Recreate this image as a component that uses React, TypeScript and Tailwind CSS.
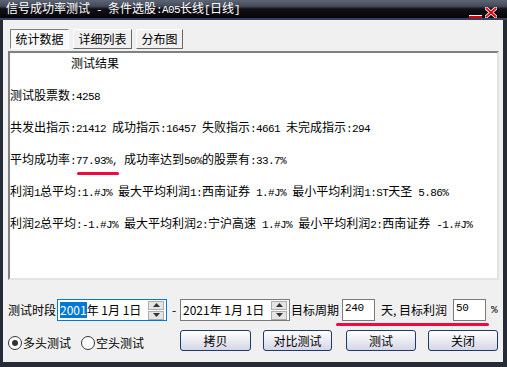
import type { ReactNode } from 'react';

const ASCII = /^[\x20-\x7e]+$/;

// panel / title text: CJK at 12px, ASCII as half-width mono
function Mixed({ text }: { text: string }) {
  const parts = text.split(/([\x20-\x7e]+)/).filter(Boolean);
  return (
    <>
      {parts.map((p, i) =>
        ASCII.test(p) ? (
          <span key={i} className="font-['Liberation_Mono',monospace] text-[11px] tracking-[-0.6px]">
            {p}
          </span>
        ) : (
          <span key={i}>{p}</span>
        )
      )}
    </>
  );
}

function Tab({ label, active, width }: { label: string; active?: boolean; width: string }) {
  return (
    <div
      className={`h-[20px] flex items-center justify-center text-[12px] leading-[16px] text-black ${width} ${
        active
          ? 'bg-[#f9f9f9] border border-t-[#808080] border-l-[#808080] border-b-white border-r-white'
          : 'bg-[#f0f0f0] border border-t-white border-l-white border-b-[#696969] border-r-[#696969]'
      }`}
    >
      {label}
    </div>
  );
}

function Spin() {
  return (
    <div className="ml-auto mr-[2px] flex flex-col w-[16px] h-[19px] gap-[1px]">
      <div className="flex-1 bg-[#e5e5e5] border border-[#adadad] flex items-center justify-center">
        <svg width="7" height="4" viewBox="0 0 7 4">
          <path d="M0 4L3.5 0L7 4Z" fill="#333" />
        </svg>
      </div>
      <div className="flex-1 bg-[#e5e5e5] border border-[#adadad] flex items-center justify-center">
        <svg width="7" height="4" viewBox="0 0 7 4">
          <path d="M0 0L3.5 4L7 0Z" fill="#333" />
        </svg>
      </div>
    </div>
  );
}

function DateBox({ year, focused }: { year: string; focused?: boolean }) {
  return (
    <div
      className={`w-[110px] h-[22px] bg-white flex items-center pl-[2px] border ${
        focused ? 'border-[#0078d7]' : 'border-[#7a7a7a]'
      }`}
    >
      <span className={focused ? 'bg-[#0078d7] text-white' : ''}>{year}</span>
      <span className="whitespace-pre">年 1月 1日</span>
      <Spin />
    </div>
  );
}

function Field({ value }: { value: string }) {
  return (
    <div className="w-[33px] h-[22px] bg-white border border-[#7a7a7a] pl-[2px] pt-[1px] font-['Liberation_Mono',monospace] text-[11px] leading-[14px] tracking-[-0.4px]">
      {value}
    </div>
  );
}

function Radio({ label, checked }: { label: string; checked?: boolean }) {
  return (
    <div className="flex items-center gap-[1px]">
      <div className="w-[14px] h-[14px] rounded-full border border-[#333] bg-white flex items-center justify-center">
        {checked && <div className="w-[6px] h-[6px] rounded-full bg-[#333]" />}
      </div>
      <span>{label}</span>
    </div>
  );
}

function Button({ children, className }: { children: ReactNode; className: string }) {
  return (
    <div
      className={`h-[21px] rounded-[3px] border border-[#1d3b6a] bg-gradient-to-b from-white to-[#d6d6e6] flex items-center justify-center ${className}`}
    >
      {children}
    </div>
  );
}

const lines = [
  '测试股票数:4258',
  '共发出指示:21412 成功指示:16457 失败指示:4661 未完成指示:294',
  '平均成功率:77.93%, 成功率达到50%的股票有:33.7%',
  '利润1总平均:1.#J% 最大平均利润1:西南证券 1.#J% 最小平均利润1:ST天圣 5.86%',
  '利润2总平均:-1.#J% 最大平均利润2:宁沪高速 1.#J% 最小平均利润2:西南证券 -1.#J%',
];

export default function App() {
  return (
    <div className="w-[507px] h-[367px] bg-[#272b35] flex flex-col font-['Noto_Sans_CJK_SC',sans-serif] text-[12px] leading-[16px] text-black">
      {/* title bar */}
      <div className="h-[18px] flex items-center pl-[6px] pr-[10px] bg-[linear-gradient(to_bottom,#5d6474_0%,#444a57_35%,#101016_50%,#060609_100%)]">
        <span className="text-white whitespace-pre">
          <Mixed text="信号成功率测试 - 条件选股:A05长线[日线]" />
        </span>
        <div className="ml-auto flex items-end gap-[3px] h-[11px] mt-[7px]">
          <div className="w-[13px] h-[3px] bg-[#e00000] border-t border-white" />
          <svg width="12" height="11" viewBox="0 0 12 11">
            <path d="M1.5 1.5L10.5 9.5M10.5 1.5L1.5 9.5" stroke="#fff" strokeWidth="3.4" strokeLinecap="square" />
            <path d="M1.5 1.5L10.5 9.5M10.5 1.5L1.5 9.5" stroke="#e00000" strokeWidth="1.8" strokeLinecap="square" />
          </svg>
        </div>
      </div>
      <div className="h-[2px] bg-[#34425f]" />

      {/* body */}
      <div className="ml-[3px] mr-[4px] mb-[5px] flex-1 bg-[#f0f0f0] flex flex-col px-[5px] pt-[9px]">
        <div className="flex gap-[4px] pl-[2px]">
          <Tab label="统计数据" active width="w-[59px]" />
          <Tab label="详细列表" width="w-[59px]" />
          <Tab label="分布图" width="w-[47px]" />
        </div>

        <div className="relative mt-[2px] w-[491px] h-[229px] bg-white border-2 border-t-[#808080] border-l-[#808080] border-b-[#e3e3e3] border-r-[#e3e3e3] pt-[2px] flex flex-col gap-[16px] whitespace-pre">
          <div className="pl-[61px]">测试结果</div>
          {lines.map(l => (
            <div key={l} className="h-[16px]">
              <Mixed text={l} />
            </div>
          ))}
          <div className="absolute left-[67px] top-[119px] w-[42px] h-[3px] rounded-full bg-[#f2073f]" />
        </div>

        <div className="relative mt-[18px] h-[24px] flex items-center whitespace-pre">
          <span>测试时段</span>
          <div className="ml-[1px]">
            <DateBox year="2001" focused />
          </div>
          <span className="ml-[5px] w-[8px]">-</span>
          <DateBox year="2021" />
          <span className="ml-[1px]">目标周期</span>
          <div className="ml-[3px]">
            <Field value="240" />
          </div>
          <span className="ml-[6px]">
            天<span className="inline-block w-[6px]">,</span>目标利润
          </span>
          <div className="ml-[6px]">
            <Field value="50" />
          </div>
          <span className="ml-[5px] font-['Liberation_Mono',monospace] text-[11px]">%</span>
          <div className="absolute left-[328px] top-[25px] w-[153px] h-[3px] rounded-full bg-[#f2073f]" />
        </div>

        <div className="mt-[8px] flex items-start">
          <div className="flex items-center gap-[10px] mt-[5px]">
            <Radio label="多头测试" checked />
            <Radio label="空头测试" />
          </div>
          <Button className="ml-[36px] w-[71px]">拷贝</Button>
          <Button className="ml-[12px] w-[69px]">对比测试</Button>
          <Button className="ml-[14px] w-[70px]">测试</Button>
          <Button className="ml-[12px] w-[70px]">关闭</Button>
        </div>
      </div>
    </div>
  );
}
